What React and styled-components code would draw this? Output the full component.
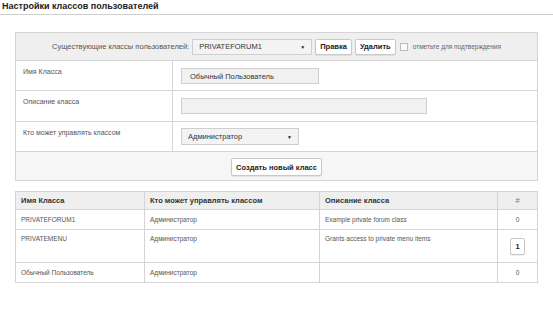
import React from 'react'
import styled, { createGlobalStyle } from 'styled-components'

const GlobalStyle = createGlobalStyle`
  body {
    margin: 0;
    background: #fff;
    font-family: "Liberation Sans", Arial, sans-serif;
    color: #333;
  }
`

const Page = styled.div`
  width: 553px;
  height: 330px;
  overflow: hidden;
`

const Title = styled.h1`
  margin: 0;
  padding: 1px 2px 0;
  height: 13px;
  font-size: 9px;
  font-weight: bold;
  color: #222;
  border-bottom: 1px solid #cfcfcf;
  line-height: 11px;
`

const Panel = styled.table`
  margin: 17px 0 0 15px;
  width: 523px;
  border-collapse: collapse;
  border: 1px solid #d4d4d4;
  td {
    border: 1px solid #d4d4d4;
  }
`

const HeadCell = styled.td`
  height: 27px;
  background: #efefef;
  text-align: center;
  padding: 0;
`

const HeadLine = styled.div`
  display: flex;
  align-items: center;
  justify-content: center;
  gap: 3px;
  color: #555;
  font-size: 7.5px;
`

const Label = styled.td`
  width: 157px;
  padding: 7px 8px 0 7px;
  vertical-align: top;
  height: ${p => p.$h}px;
  color: #555;
  font-size: 7px;
  box-sizing: border-box;
`

const Field = styled.td`
  padding: 0 0 0 8px;
  vertical-align: middle;
`

const TextBox = styled.div`
  width: ${p => p.$w}px;
  height: 16px;
  box-sizing: border-box;
  border: 1px solid #cfcfcf;
  background: #f1f1f1;
  font-size: 7.5px;
  color: #333;
  padding: 0 8px;
  line-height: 15px;
`

const Select = styled.div`
  width: ${p => p.$w}px;
  height: ${p => p.$h || 16}px;
  box-sizing: border-box;
  border: 1px solid #cfcfcf;
  background: #f3f3f3;
  font-size: 7.5px;
  font-weight: normal;
  color: #333;
  padding: 0 6px;
  display: flex;
  align-items: center;
  justify-content: space-between;
  text-align: left;
  &::after {
    content: "▼";
    font-size: 5px;
    color: #222;
  }
`

const Button = styled.div`
  height: ${p => p.$h || 16}px;
  box-sizing: border-box;
  padding: 0 4px;
  border: 1px solid #c8c8c8;
  border-radius: 2px;
  background: #fff;
  font-size: 7.5px;
  font-weight: bold;
  color: #222;
  display: inline-flex;
  align-items: center;
  justify-content: center;
  box-shadow: 0 1px 1px rgba(0, 0, 0, 0.08);
`

const Check = styled.span`
  width: 6px;
  height: 6px;
  border: 1px solid #bbb;
  background: #fafafa;
  margin: 0 2px 0 1px;
`

const Hint = styled.span`
  font-size: 6.5px;
  color: #666;
`

const FootCell = styled.td`
  height: 28px;
  background: #f6f6f6;
  text-align: center;
  padding: 0;
`

const List = styled.table`
  margin: 10px 0 0 15px;
  width: 523px;
  border-collapse: collapse;
  border: 1px solid #d4d4d4;
  th, td {
    border: 1px solid #d4d4d4;
    text-align: left;
    padding: 0 5px;
  }
  th {
    height: 17px;
    background: #efefef;
    font-size: 7.5px;
    font-weight: bold;
    color: #333;
  }
  td {
    font-size: 6.5px;
    color: #555;
  }
`

const Row = styled.tr`
  td {
    height: ${p => p.$h}px;
    vertical-align: ${p => (p.$top ? 'top' : 'middle')};
    padding-top: ${p => (p.$top ? '5px' : '0')};
  }
`

const Num = styled.td`
  && {
    text-align: center;
    vertical-align: middle;
    padding: 0;
  }
`

const NumHead = styled.th`
  && {
    text-align: center;
    font-weight: normal;
    color: #777;
  }
`

const classes = [
  { name: 'PRIVATEFORUM1', admin: 'Администратор', desc: 'Example private forum class', count: 0 },
  { name: 'PRIVATEMENU', admin: 'Администратор', desc: 'Grants access to private menu items', count: 1, link: true },
  { name: 'Обычный Пользователь', admin: 'Администратор', desc: '', count: 0 },
]

export default function App() {
  return (
    <Page>
      <GlobalStyle />
      <Title>Настройки классов пользователей</Title>

      <Panel>
        <tbody>
          <tr>
            <HeadCell colSpan={2}>
              <HeadLine>
                <span>Существующие классы пользователей:</span>
                <Select $w={120}>PRIVATEFORUM1</Select>
                <Button>Правка</Button>
                <Button>Удалить</Button>
                <Check />
                <Hint>отметьте для подтверждения</Hint>
              </HeadLine>
            </HeadCell>
          </tr>
          <tr>
            <Label $h={30}>Имя Класса</Label>
            <Field><TextBox $w={138}>Обычный Пользователь</TextBox></Field>
          </tr>
          <tr>
            <Label $h={31}>Описание класса</Label>
            <Field><TextBox $w={246} /></Field>
          </tr>
          <tr>
            <Label $h={30}>Кто может управлять классом</Label>
            <Field><Select $w={118} $h={17}>Администратор</Select></Field>
          </tr>
          <tr>
            <FootCell colSpan={2}>
              <Button $h={18}>Создать новый класс</Button>
            </FootCell>
          </tr>
        </tbody>
      </Panel>

      <List>
        <thead>
          <tr>
            <th style={{ width: 118 }}>Имя Класса</th>
            <th style={{ width: 164 }}>Кто может управлять классом</th>
            <th style={{ width: 167 }}>Описание класса</th>
            <NumHead>#</NumHead>
          </tr>
        </thead>
        <tbody>
          {classes.map(c => (
            <Row key={c.name} $h={c.link ? 27 : 19} $top={c.link}>
              <td>{c.name}</td>
              <td>{c.admin}</td>
              <td>{c.desc}</td>
              <Num>{c.link ? <Button $h={17}>{c.count}</Button> : c.count}</Num>
            </Row>
          ))}
        </tbody>
      </List>
    </Page>
  )
}
